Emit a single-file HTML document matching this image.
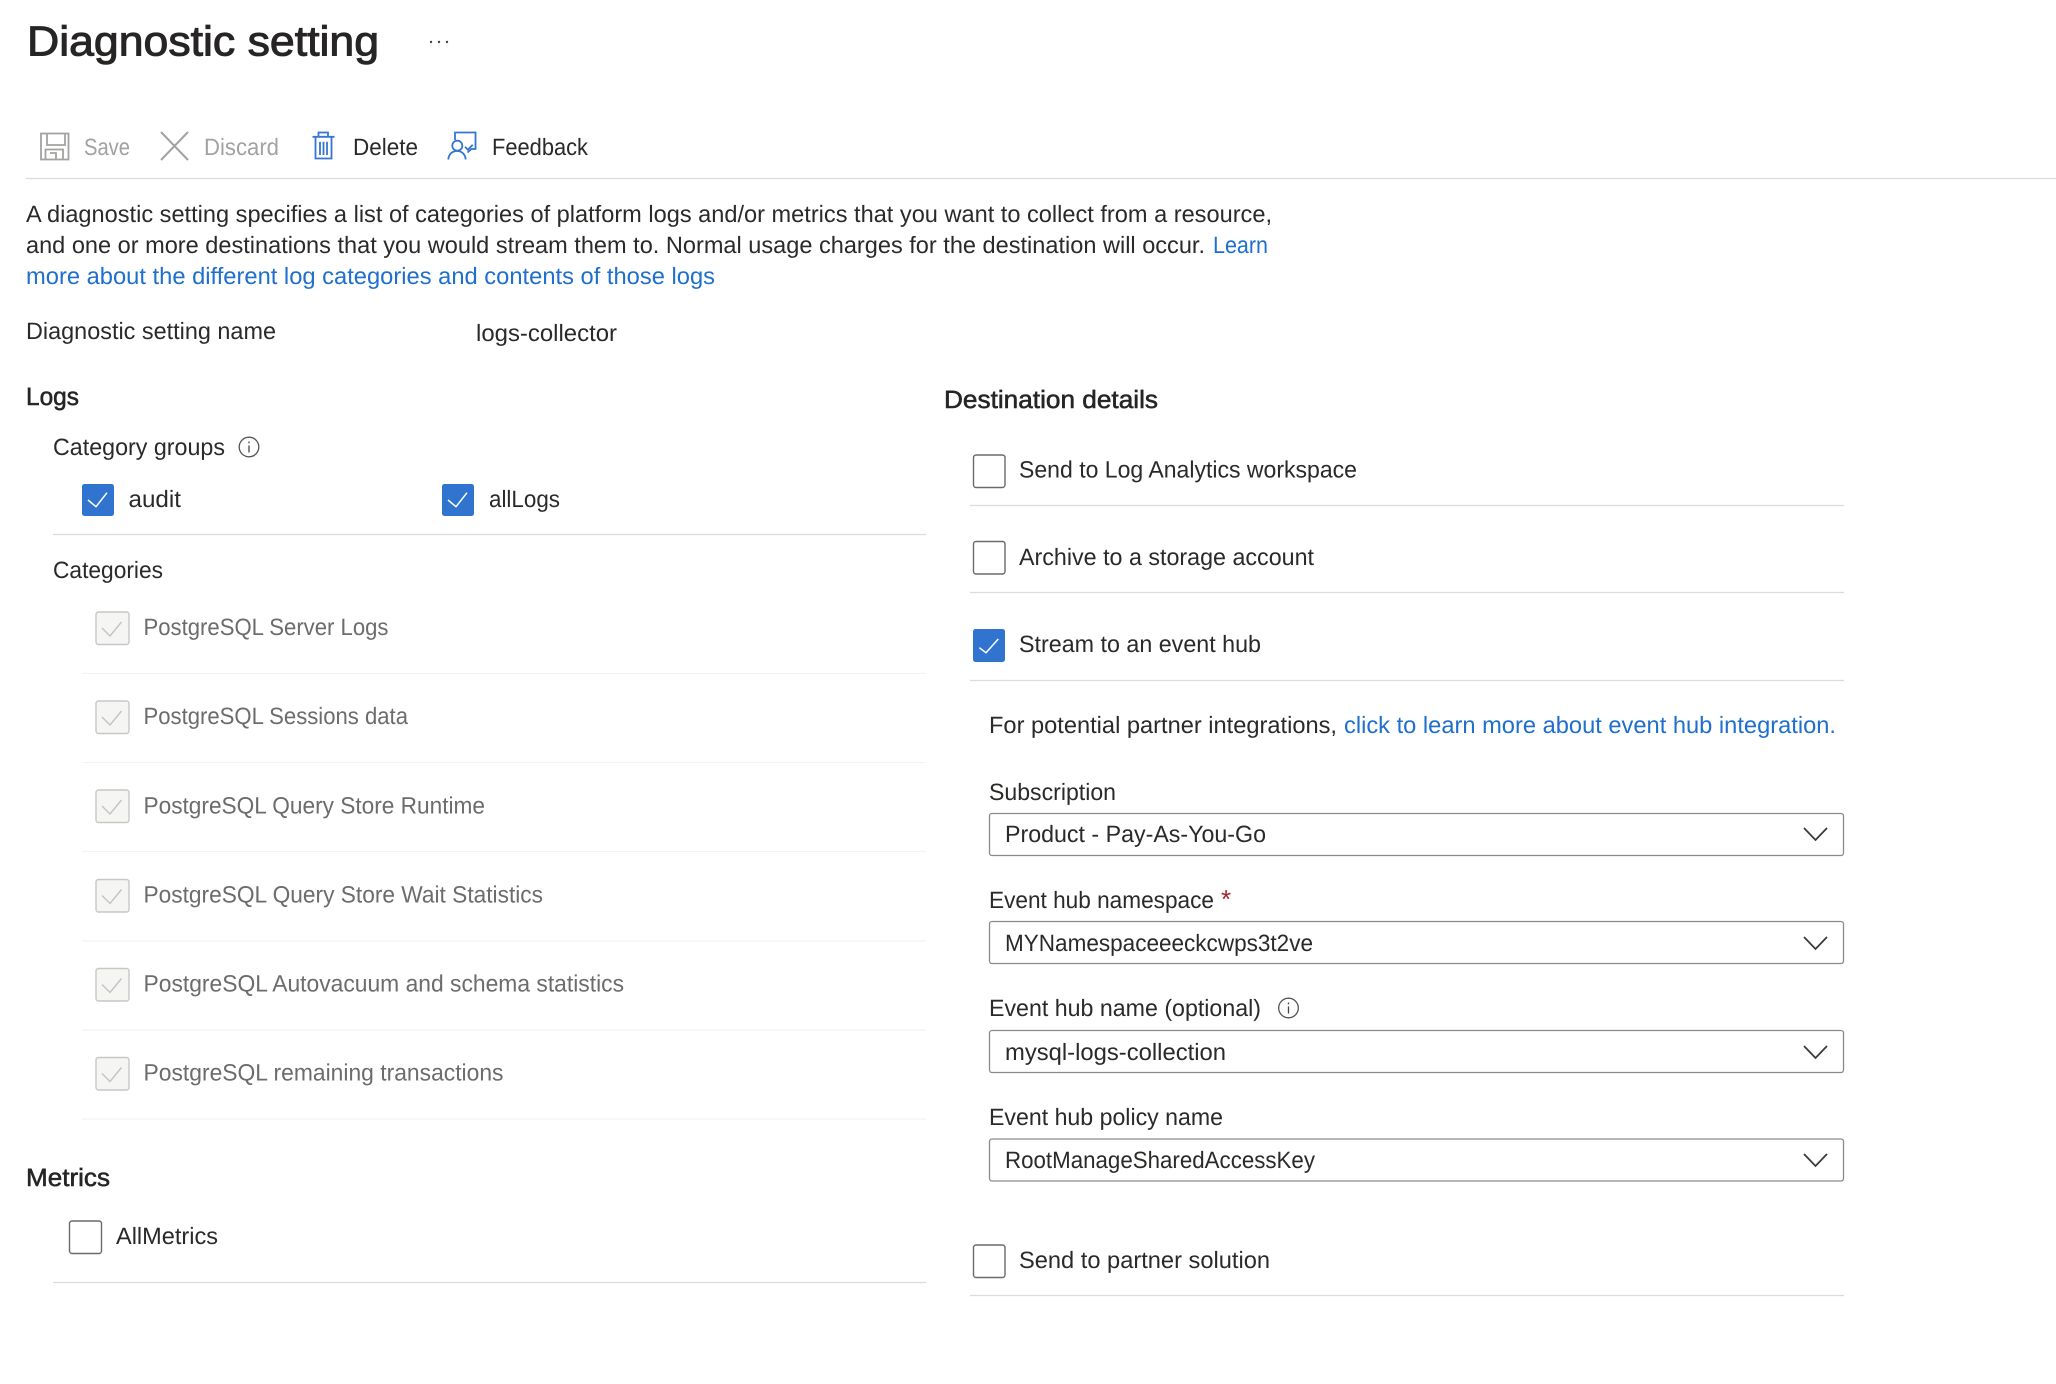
<!DOCTYPE html>
<html><head><meta charset="utf-8"><style>
html,body{margin:0;padding:0;background:#fff;width:2056px;height:1384px;overflow:hidden}
svg{display:block}
text{font-family:"Liberation Sans",sans-serif;font-size:23.6px;fill:#2b2a29;text-rendering:geometricPrecision}
.d{fill:#6d6c6b}.l{fill:#1f6fce}.g{fill:#a3a2a1}.b{font-size:25px;fill:#262524;stroke:#262524;stroke-width:.55px}
.ln{stroke:#dcdbda;stroke-width:1.3}.ll{stroke:#f3f2f1;stroke-width:1.3}
.cb{fill:#fff;stroke:#6b6a69;stroke-width:1.4}.on{fill:#3174d0}.dis{fill:#f5f5f4;stroke:#c8c7c6;stroke-width:1.4}
.ck{fill:none;stroke:#fff;stroke-width:1.5}.ckd{fill:none;stroke:#c4c3c2;stroke-width:1.4}
.box{fill:#fff;stroke:#8a8a8a;stroke-width:1.3}.ch{fill:none;stroke:#3b3a39;stroke-width:1.8}
.ic{fill:none;stroke:#3476d2;stroke-width:1.8}.ig{fill:none;stroke:#a3a2a1;stroke-width:1.8}
</style></head><body>
<svg width="2056" height="1384" viewBox="0 0 2056 1384" xmlns="http://www.w3.org/2000/svg">
<text x="27" y="55.500" textLength="352" lengthAdjust="spacingAndGlyphs" style="font-size:42px;fill:#262524;stroke:#262524;stroke-width:1px">Diagnostic setting</text>
<circle cx="431" cy="42" r="1.2" fill="#444"/><circle cx="439" cy="42" r="1.2" fill="#444"/><circle cx="447" cy="42" r="1.2" fill="#444"/>

<!-- toolbar -->
<path class="ig" d="M41 133.500h27.500V159.500H41zM47 133.500v11.500h18v-11.500M45.500 159.500v-10h17.500v10M50 153h6v6.500"/>
<text class="g" x="84" y="155" textLength="46" lengthAdjust="spacingAndGlyphs">Save</text>
<path class="ig" d="M161 132l27 28M188 132l-27 28" style="stroke-width:2"/>
<text class="g" x="204" y="155" textLength="75" lengthAdjust="spacingAndGlyphs">Discard</text>
<path class="ic" d="M312.500 136.800h22M318.500 136.800v-4.300h9.500v4.300M315.500 136.800v21.700h16v-21.700M320 141.700v13.300M323.500 141.700v13.300M327 141.700v13.300"/>
<text x="353" y="155" textLength="65" lengthAdjust="spacingAndGlyphs">Delete</text>
<path class="ic" d="M455 140v-7.500h20.500v16.500h-4l-4 3.500"/>
<path class="ic" d="M465 146.700l3 3 4.700-5"/>
<circle class="ic" cx="457.300" cy="145.700" r="5"/>
<path class="ic" d="M448.300 159.500c.5-5.500 4-8.500 8.700-8.500s8.200 3 8.700 8.500"/>
<text x="492" y="155" textLength="96" lengthAdjust="spacingAndGlyphs">Feedback</text>
<line class="ln" x1="26" y1="178.500" x2="2056" y2="178.500"/>

<!-- intro -->
<text x="26" y="222" textLength="1246" lengthAdjust="spacingAndGlyphs">A diagnostic setting specifies a list of categories of platform logs and/or metrics that you want to collect from a resource,</text>
<text x="26" y="253" textLength="1179" lengthAdjust="spacingAndGlyphs">and one or more destinations that you would stream them to. Normal usage charges for the destination will occur.</text>
<text class="l" x="1213" y="253" textLength="55" lengthAdjust="spacingAndGlyphs">Learn</text>
<text class="l" x="26" y="284" textLength="689" lengthAdjust="spacingAndGlyphs">more about the different log categories and contents of those logs</text>

<text x="26" y="339" textLength="250" lengthAdjust="spacingAndGlyphs">Diagnostic setting name</text>
<text x="476" y="341" textLength="141" lengthAdjust="spacingAndGlyphs">logs-collector</text>

<!-- logs -->
<text class="b" x="26" y="405" textLength="53" lengthAdjust="spacingAndGlyphs">Logs</text>
<text x="53" y="455" textLength="172" lengthAdjust="spacingAndGlyphs">Category groups</text>
<circle cx="249" cy="447" r="9.800" fill="none" stroke="#555" stroke-width="1.300"/><path d="M249 445.500v7M249 441.500v1.800" stroke="#444" stroke-width="1.300"/>
<rect class="on" x="82" y="484" width="32" height="32" rx="2.500"/><path class="ck" d="M88 500l8 6.700 11-14"/>
<text x="128.500" y="507" textLength="52.500" lengthAdjust="spacingAndGlyphs">audit</text>
<rect class="on" x="442" y="484" width="32" height="32" rx="2.500"/><path class="ck" d="M448 500l8 6.700 11-14"/>
<text x="489" y="507" textLength="71" lengthAdjust="spacingAndGlyphs">allLogs</text>
<line class="ln" x1="53" y1="534.500" x2="926" y2="534.500"/>
<text x="53" y="578" textLength="110" lengthAdjust="spacingAndGlyphs">Categories</text>

<rect class="dis" x="96" y="612" width="33" height="32.500" rx="2.500"/><path class="ckd" d="M102 628l8 8 11.500-14"/>
<text class="d" x="143.500" y="635" textLength="245" lengthAdjust="spacingAndGlyphs">PostgreSQL Server Logs</text>
<line class="ll" x1="82" y1="673.500" x2="926" y2="673.500"/>
<rect class="dis" x="96" y="701" width="33" height="32.500" rx="2.500"/><path class="ckd" d="M102 717l8 8 11.500-14"/>
<text class="d" x="143.500" y="724" textLength="264.500" lengthAdjust="spacingAndGlyphs">PostgreSQL Sessions data</text>
<line class="ll" x1="82" y1="762.500" x2="926" y2="762.500"/>
<rect class="dis" x="96" y="790" width="33" height="32.500" rx="2.500"/><path class="ckd" d="M102 806l8 8 11.500-14"/>
<text class="d" x="143.500" y="813.500" textLength="341.500" lengthAdjust="spacingAndGlyphs">PostgreSQL Query Store Runtime</text>
<line class="ll" x1="82" y1="851.500" x2="926" y2="851.500"/>
<rect class="dis" x="96" y="879.500" width="33" height="32.500" rx="2.500"/><path class="ckd" d="M102 895.500l8 8 11.500-14"/>
<text class="d" x="143.500" y="902.500" textLength="399.500" lengthAdjust="spacingAndGlyphs">PostgreSQL Query Store Wait Statistics</text>
<line class="ll" x1="82" y1="941" x2="926" y2="941"/>
<rect class="dis" x="96" y="968.500" width="33" height="32.500" rx="2.500"/><path class="ckd" d="M102 984.500l8 8 11.500-14"/>
<text class="d" x="143.500" y="991.500" textLength="480.500" lengthAdjust="spacingAndGlyphs">PostgreSQL Autovacuum and schema statistics</text>
<line class="ll" x1="82" y1="1030" x2="926" y2="1030"/>
<rect class="dis" x="96" y="1057.500" width="33" height="32.500" rx="2.500"/><path class="ckd" d="M102 1073.500l8 8 11.500-14"/>
<text class="d" x="143.500" y="1080.500" textLength="360" lengthAdjust="spacingAndGlyphs">PostgreSQL remaining transactions</text>
<line class="ll" x1="82" y1="1119" x2="926" y2="1119"/>

<text class="b" x="26" y="1186" textLength="84" lengthAdjust="spacingAndGlyphs">Metrics</text>
<rect class="cb" x="69.500" y="1221" width="32" height="32.500" rx="2.500"/>
<text x="116" y="1244" textLength="102" lengthAdjust="spacingAndGlyphs">AllMetrics</text>
<line class="ln" x1="53" y1="1282.500" x2="926" y2="1282.500"/>

<!-- destination -->
<text class="b" x="944" y="408" textLength="214" lengthAdjust="spacingAndGlyphs">Destination details</text>
<rect class="cb" x="973.500" y="455" width="31.500" height="32.500" rx="2.500"/>
<text x="1019" y="477.500" textLength="338" lengthAdjust="spacingAndGlyphs">Send to Log Analytics workspace</text>
<line class="ln" x1="970" y1="505.500" x2="1844" y2="505.500"/>
<rect class="cb" x="973.500" y="541.500" width="31.500" height="32.500" rx="2.500"/>
<text x="1019" y="565" textLength="295" lengthAdjust="spacingAndGlyphs">Archive to a storage account</text>
<line class="ln" x1="970" y1="592.500" x2="1844" y2="592.500"/>
<rect class="on" x="973" y="629" width="32" height="33" rx="2.500"/><path class="ck" d="M979.300 647.700l6.700 5 12.300-13.700"/>
<text x="1019" y="652" textLength="242" lengthAdjust="spacingAndGlyphs">Stream to an event hub</text>
<line class="ln" x1="970" y1="680.500" x2="1844" y2="680.500"/>
<text x="989" y="733" textLength="348" lengthAdjust="spacingAndGlyphs">For potential partner integrations,</text>
<text class="l" x="1344" y="733" textLength="492" lengthAdjust="spacingAndGlyphs">click to learn more about event hub integration.</text>

<text x="989" y="800" textLength="127" lengthAdjust="spacingAndGlyphs">Subscription</text>
<rect class="box" x="989.500" y="813.500" width="854" height="42" rx="2.500"/>
<text x="1005" y="842" textLength="261" lengthAdjust="spacingAndGlyphs">Product - Pay-As-You-Go</text>
<path class="ch" d="M1804 828l11.500 12 11.500-12"/>

<text x="989" y="908" textLength="225" lengthAdjust="spacingAndGlyphs">Event hub namespace</text>
<text x="1221" y="908" style="font-size:26px;fill:#a4262c">*</text>
<rect class="box" x="989.500" y="921.500" width="854" height="42" rx="2.500"/>
<text x="1005" y="951" textLength="308" lengthAdjust="spacingAndGlyphs">MYNamespaceeeckcwps3t2ve</text>
<path class="ch" d="M1804 937l11.500 12 11.500-12"/>

<text x="989" y="1016" textLength="272" lengthAdjust="spacingAndGlyphs">Event hub name (optional)</text>
<circle cx="1288.500" cy="1008" r="9.800" fill="none" stroke="#555" stroke-width="1.300"/><path d="M1288.500 1006.500v7M1288.500 1002.500v1.800" stroke="#444" stroke-width="1.300"/>
<rect class="box" x="989.500" y="1030.500" width="854" height="42" rx="2.500"/>
<text x="1005" y="1060" textLength="221" lengthAdjust="spacingAndGlyphs">mysql-logs-collection</text>
<path class="ch" d="M1804 1046l11.500 12 11.500-12"/>

<text x="989" y="1125" textLength="234" lengthAdjust="spacingAndGlyphs">Event hub policy name</text>
<rect class="box" x="989.500" y="1139" width="854" height="42" rx="2.500"/>
<text x="1005" y="1168" textLength="310" lengthAdjust="spacingAndGlyphs">RootManageSharedAccessKey</text>
<path class="ch" d="M1804 1154l11.500 12 11.500-12"/>

<rect class="cb" x="973.500" y="1245" width="31.500" height="32.500" rx="2.500"/>
<text x="1019" y="1268" textLength="251" lengthAdjust="spacingAndGlyphs">Send to partner solution</text>
<line class="ln" x1="970" y1="1295.500" x2="1844" y2="1295.500"/>
</svg>
</body></html>
